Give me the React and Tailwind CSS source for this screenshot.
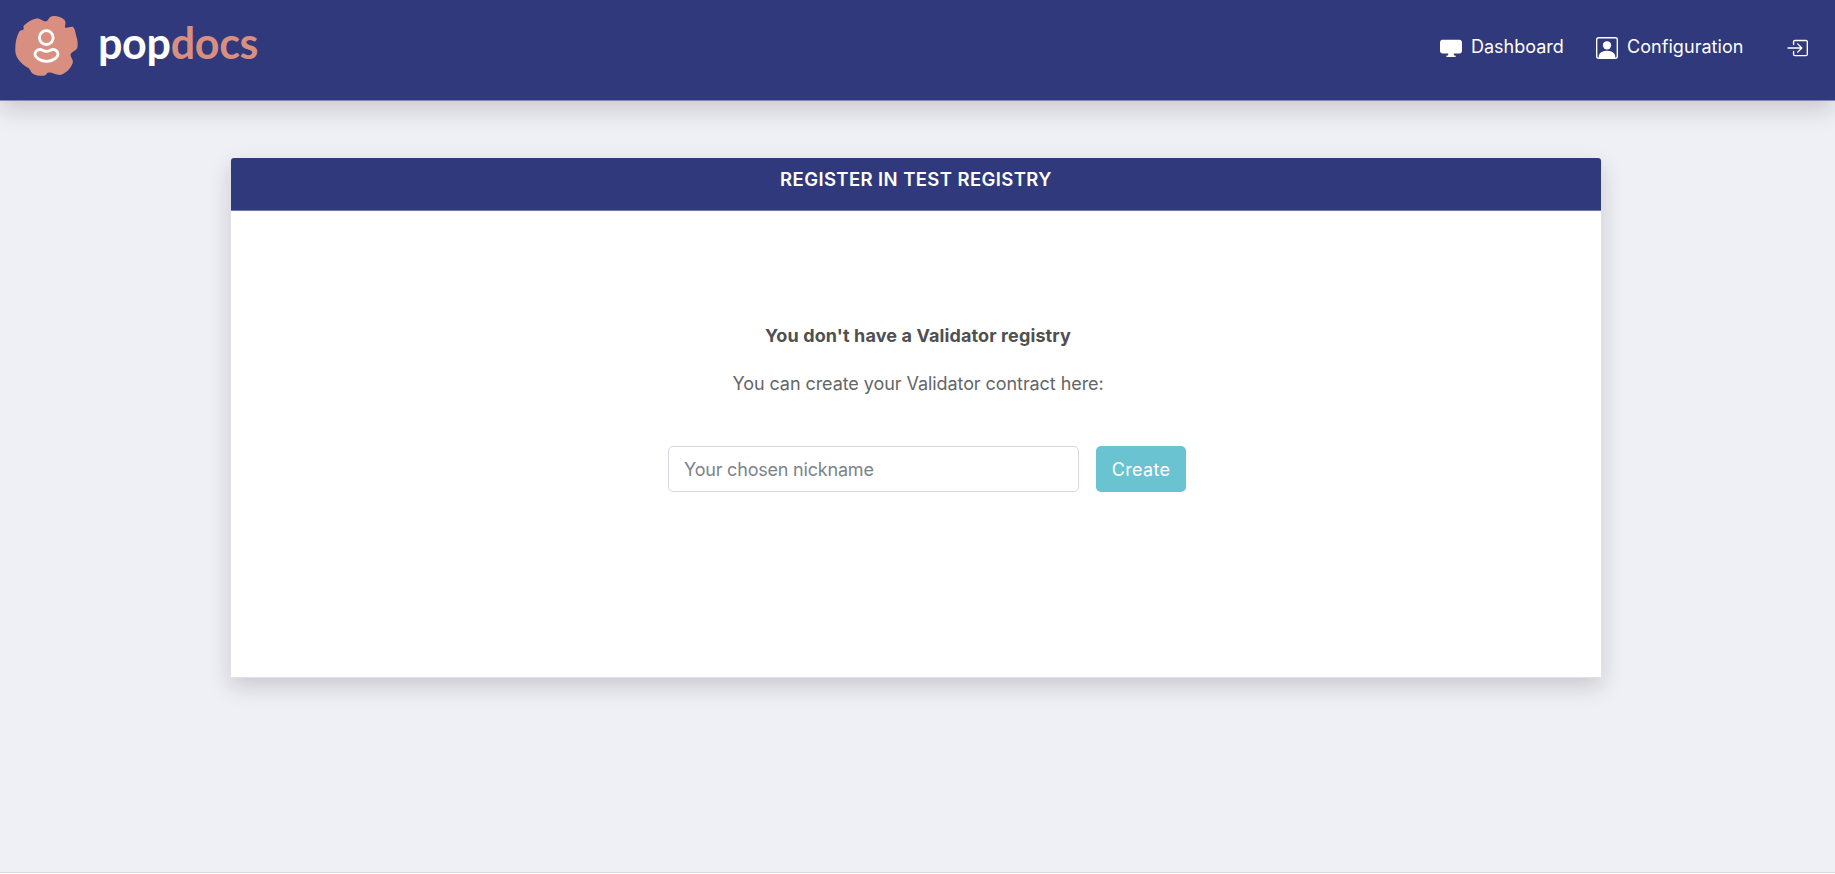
import { BsDisplayFill, BsPersonSquare, BsBoxArrowInRight } from "react-icons/bs";

function LogoMark() {
  return (
    <svg width="64" height="62" viewBox="15 15 64 62" fill="none" className="shrink-0">
      <path
        fill="#d98f80"
        d="M24 25.5C29 20.500 35.500 18 38.500 18.500C41 19 43 21.500 46 21.500C48.500 21 48.500 17 52 16.300C56 15.500 61 17 64 19.500C67 22.500 64.500 24.500 65 27.500C67 28.500 71 26.300 73 27C75.500 29 75.500 35 77 38.500C77.800 42 78 46 77 48.500C75.500 51 71 52 70.500 55C71 58 74 60.500 72.500 63.500C70.500 69 65 74 60 75C55 75 51.500 71.800 48 72.800C46 73.600 46.500 75.500 43.500 75.800C39 76 35 75.500 32.500 73.500C30 71 30.500 69 27.500 67.500C22 64.500 16.500 58.500 15.500 53C14.700 45 16 38 19 32C20.500 29.500 22.500 30.700 23.500 29.500C24.200 28 22.800 26.500 24 25.500Z"
      />
      <circle cx="46.300" cy="37.600" r="6.900" stroke="#fff" strokeWidth="2.800" />
      <path
        stroke="#fff"
        strokeWidth="2.800"
        strokeLinejoin="round"
        d="M40 49.500C42.500 49.500 43 51.300 46.500 51.300C50 51.300 50.500 49.500 53 49.500C56 49.500 58 52 58 54C58 57.500 52.500 61.300 46.500 61.300C40.500 61.300 35 57.500 35 54C35 52 37 49.500 40 49.500Z"
      />
    </svg>
  );
}

function Header() {
  return (
    <header className="flex h-[101px] items-start justify-between border-b border-[#8386ad] bg-[#30397b] shadow-[0_9px_22px_rgba(20,0,15,0.16)]">
      <a className="flex items-start pt-[15px] pl-[15px]">
        <LogoMark />
        <span className="ml-[19px] font-['Lato'] text-[43px] leading-[56px] font-bold tracking-[-0.3px] text-white">
          pop<span className="text-[#d98f80]">docs</span>
        </span>
      </a>
      <nav className="mt-[37px] flex h-[22px] items-center pr-[27px] text-[18px] text-white">
        <a className="flex items-center">
          <BsDisplayFill size={22} />
          <span className="-mt-[3px] ml-[9px] w-[94px] whitespace-nowrap">Dashboard</span>
        </a>
        <a className="ml-[31px] flex items-center">
          <BsPersonSquare size={22} />
          <span className="-mt-[3px] ml-[9px] w-[118px] whitespace-nowrap tracking-[0.05px]">Configuration</span>
        </a>
        <a className="ml-[41px]">
          <BsBoxArrowInRight size={22} />
        </a>
      </nav>
    </header>
  );
}

export default function App() {
  return (
    <div className="flex h-[874px] flex-col overflow-hidden bg-white font-['Inter',sans-serif]">
      <div className="flex h-[873px] flex-col border-b border-[#d9d9e0] bg-[#eff0f6]">
        <Header />
        <main className="mt-[57px] ml-[230px] h-[520px] w-[1372px] rounded-t-[4px] border-x border-b border-[#e2e1e8] bg-white shadow-[0_9px_22px_rgba(20,0,15,0.16)]">
          <h1 className="h-[53px] rounded-t-[3px] border-b border-[#7478a8] bg-[#30397b] pt-[8px] text-center text-[18.5px] leading-[27px] font-semibold tracking-[0.4px] text-white">
            REGISTER IN TEST REGISTRY
          </h1>
          <section className="flex flex-col items-center pt-[111px] pl-[4px] text-[18px] leading-[27px] text-[#666]">
            <h2 className="font-bold tracking-[0.12px] text-[#505050]">You don't have a Validator registry</h2>
            <p className="mt-[21px] tracking-[-0.07px]">You can create your Validator contract here:</p>
            <form className="mt-[49px] ml-[18px] flex gap-[17px]">
              <input
                className="h-[46px] w-[411px] rounded-[5px] border border-[#d5d9df] px-[15px] tracking-[-0.2px] placeholder:text-[#7d838a]"
                placeholder="Your chosen nickname"
              />
              <button type="button" className="h-[46px] w-[90px] rounded-[5px] bg-[#6ac3d1] tracking-[0.3px] text-white">
                Create
              </button>
            </form>
          </section>
        </main>
      </div>
    </div>
  );
}
